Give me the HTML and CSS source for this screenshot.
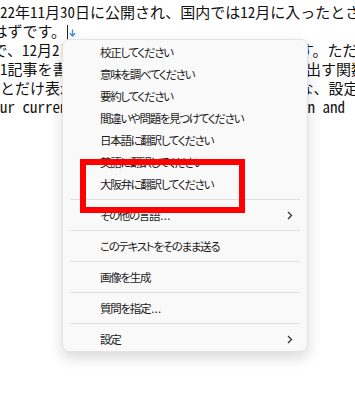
FILE: index.html
```html
<!DOCTYPE html>
<html lang="ja">
<head>
    <meta charset="UTF-8">
    <meta name="viewport" content="width=device-width, initial-scale=1.0">
    <title>テキストメニュー</title>
    <link rel="stylesheet" href="styles.css">
</head>
<body>

    <div class="doc">
        <div class="line">2022年11月30日に公開され、国内では12月に入ったとされています。</div>
        <div class="line half">はずです。<span class="caret"></span><svg class="drop" width="7" height="8" viewBox="0 0 7 8"><path d="M3.5 0.5V7M0.8 4.3L3.5 7L6.2 4.3" fill="none" stroke="#3d8fe0" stroke-width="1.4"/></svg></div>
        <div class="line half">で、12月2日から利用可能になると書いています。ただ</div>
        <div class="line">月1記事を書き、その内容を自動で要約して書き出す関数</div>
        <div class="line">、とだけ表示されます。その場合は、このような、設定画面</div>
        <div class="line">Your current text and select the translation and</div>
    </div>

    <div class="menu">
        <div class="item">校正してください</div>
        <div class="item">意味を調べてください</div>
        <div class="item">要約してください</div>
        <div class="item">間違いや問題を見つけてください</div>
        <div class="item">日本語に翻訳してください</div>
        <div class="item">英語に翻訳してください</div>
        <div class="item">大阪弁に翻訳してください</div>
        <div class="sep"></div>
        <div class="item"><span>その他の言語<span class="dots">...</span></span>
            <svg class="chev" width="6" height="9" viewBox="0 0 6 9"><path d="M1 1L4.5 4.5L1 8" fill="none" stroke="#333" stroke-width="1.3"/></svg>
        </div>
        <div class="sep"></div>
        <div class="item">このテキストをそのまま送る</div>
        <div class="sep"></div>
        <div class="item">画像を生成</div>
        <div class="sep"></div>
        <div class="item"><span>質問を指定<span class="dots">...</span></span></div>
        <div class="sep"></div>
        <div class="item">設定
            <svg class="chev" width="6" height="9" viewBox="0 0 6 9"><path d="M1 1L4.5 4.5L1 8" fill="none" stroke="#333" stroke-width="1.3"/></svg>
        </div>
    </div>

    <div class="mark"></div>

</body>
</html>
```

FILE: styles.css
```css
body {
    margin: 0;
    width: 355px;
    height: 399px;
    overflow: hidden;
    position: relative;
    background: #fff;
}

/* texto de fondo (editor) */
.doc {
    margin-left: -15px;
    padding-top: 2px;
    font-family: "Noto Sans CJK JP", monospace;
    font-size: 15px;
    font-feature-settings: "hwid";
    color: #111;
}

.line {
    height: 19px;
    line-height: 19px;
    white-space: nowrap;
}

.half {
    text-indent: 7.5px;
}

.caret {
    display: inline-block;
    width: 1px;
    height: 15px;
    margin-left: 1px;
    background: #222;
    vertical-align: -3px;
}

.drop {
    margin-left: 1px;
    vertical-align: 0;
}

/* menu contextual */
.menu {
    position: absolute;
    left: 62px;
    top: 39px;
    width: 244px;
    padding: 1px 0;
    background: #f9f9f9;
    border: 1px solid #e3e3e3;
    border-radius: 7px;
    box-shadow: 0 6px 14px rgba(0, 0, 0, 0.15);
    font-family: "Noto Sans CJK JP", sans-serif;
    font-size: 11.5px;
    letter-spacing: -1.3px;
    font-feature-settings: "palt" 1;
    color: #1b1b1b;
}

.item {
    height: 22px;
    display: flex;
    align-items: center;
    justify-content: space-between;
    padding: 0 14px 0 37px;
}

.dots {
    margin-left: 1px;
    letter-spacing: 0.3px;
}

.sep {
    height: 1px;
    margin: 4px 7px;
    background: #e0e0e0;
}

/* recuadro rojo */
.mark {
    position: absolute;
    left: 80px;
    top: 159px;
    width: 153px;
    height: 42px;
    border: 6px solid #ff0000;
}
```
